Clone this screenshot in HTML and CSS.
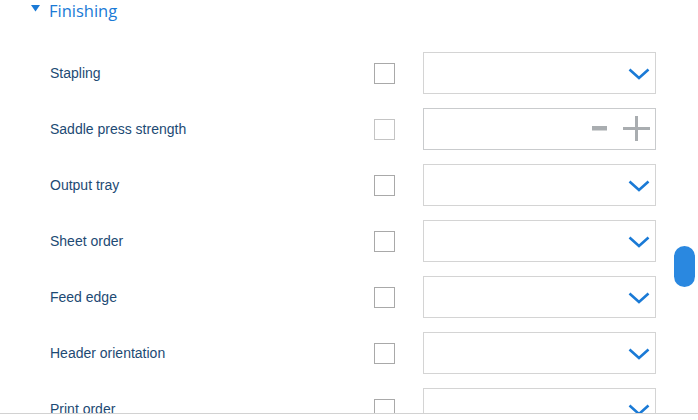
FILE: index.html
```html
<!DOCTYPE html>
<html>
<head>
<meta charset="utf-8">
<link rel="stylesheet" href="styles.css">
</head>
<body>
<div class="panel">
  <div class="section-head">
    <svg class="caret" width="9" height="7" viewBox="0 0 9 7"><polygon points="0,0 9,0 4.5,6.5" fill="#1a7ad6"/></svg>
    <span class="section-title">Finishing</span>
  </div>
  <div class="rows">
    <div class="row">
      <span class="label">Stapling</span>
      <span class="check"></span>
      <div class="field"><svg class="chev" width="22" height="12" viewBox="0 0 22 12"><polyline points="1.5,1.5 11,10 20.5,1.5" fill="none" stroke="#1a7ad6" stroke-width="2.6"/></svg></div>
    </div>
    <div class="row">
      <span class="label">Saddle press strength</span>
      <span class="check light"></span>
      <div class="field stepper">
        <svg width="60" height="26" viewBox="0 0 60 26"><rect x="1" y="10" width="15" height="4.5" fill="#a9adb0"/><rect x="32" y="11" width="27" height="3" fill="#a9adb0"/><rect x="44" y="0" width="3" height="25" fill="#a9adb0"/></svg>
      </div>
    </div>
    <div class="row">
      <span class="label">Output tray</span>
      <span class="check"></span>
      <div class="field"><svg class="chev" width="22" height="12" viewBox="0 0 22 12"><polyline points="1.5,1.5 11,10 20.5,1.5" fill="none" stroke="#1a7ad6" stroke-width="2.6"/></svg></div>
    </div>
    <div class="row">
      <span class="label">Sheet order</span>
      <span class="check"></span>
      <div class="field"><svg class="chev" width="22" height="12" viewBox="0 0 22 12"><polyline points="1.5,1.5 11,10 20.5,1.5" fill="none" stroke="#1a7ad6" stroke-width="2.6"/></svg></div>
    </div>
    <div class="row">
      <span class="label">Feed edge</span>
      <span class="check"></span>
      <div class="field"><svg class="chev" width="22" height="12" viewBox="0 0 22 12"><polyline points="1.5,1.5 11,10 20.5,1.5" fill="none" stroke="#1a7ad6" stroke-width="2.6"/></svg></div>
    </div>
    <div class="row">
      <span class="label">Header orientation</span>
      <span class="check"></span>
      <div class="field"><svg class="chev" width="22" height="12" viewBox="0 0 22 12"><polyline points="1.5,1.5 11,10 20.5,1.5" fill="none" stroke="#1a7ad6" stroke-width="2.6"/></svg></div>
    </div>
    <div class="row">
      <span class="label">Print order</span>
      <span class="check"></span>
      <div class="field"><svg class="chev" width="22" height="12" viewBox="0 0 22 12"><polyline points="1.5,1.5 11,10 20.5,1.5" fill="none" stroke="#1a7ad6" stroke-width="2.6"/></svg></div>
    </div>
  </div>
  <div class="thumb"></div>
</div>
</body>
</html>
```
FILE: styles.css
```css
html, body {
  margin: 0;
  padding: 0;
  background: #ffffff;
}
.panel {
  position: relative;
  height: 413px;
  overflow: hidden;
  border-bottom: 1px solid #d2d2d2;
}
.section-head {
  display: flex;
  align-items: center;
  height: 22px;
  padding-left: 31px;
}
.caret {
  margin-top: -5px;
  margin-right: 9px;
}
.section-title {
  font-family: "Open Sans", "Noto Sans", sans-serif;
  font-size: 16.5px;
  color: #1a7ad6;
  line-height: 22px;
}
.rows {
  display: flex;
  flex-direction: column;
  gap: 14px;
  padding-top: 30px;
  padding-left: 50px;
}
.row {
  display: flex;
  align-items: center;
  height: 42px;
}
.label {
  width: 324px;
  font-family: "Liberation Sans", Arial, sans-serif;
  font-size: 14px;
  color: #1d4a74;
}
.check {
  box-sizing: border-box;
  width: 21px;
  height: 21px;
  border: 1.5px solid #a9a9a9;
  margin-right: 28px;
}
.check.light {
  border-color: #c4c4c4;
}
.field {
  box-sizing: border-box;
  width: 233px;
  height: 42px;
  border: 1px solid #d4d4d4;
  display: flex;
  align-items: center;
  justify-content: flex-end;
  padding-right: 5px;
}
.chev {
  margin-top: 2px;
}
.stepper {
  border-color: #c9cbcd;
  padding-right: 4px;
}
.thumb {
  position: absolute;
  left: 674px;
  top: 246px;
  width: 21px;
  height: 41px;
  border-radius: 10.5px;
  background: #2a88e0;
}
```
